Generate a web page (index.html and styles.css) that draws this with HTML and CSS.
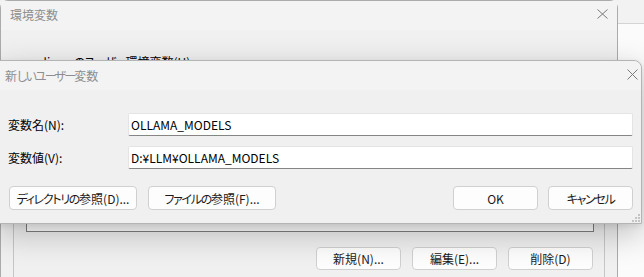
FILE: index.html
```html
<!DOCTYPE html>
<html lang="ja">
<head>
    <meta charset="UTF-8">
    <title>新しいユーザー変数</title>
    <link rel="stylesheet" href="styles.css">
</head>
<body>
    <div class="desktop">
        <!-- Parent window: 環境変数 -->
        <section class="window back-window">
            <header class="title-bar">
                <span class="title">環境変数</span>
                <svg class="close" width="11" height="10" viewBox="0 0 11 10"><path d="M0.5 0.5L10.5 9.5M10.5 0.5L0.5 9.5" stroke="#7a7a7a" stroke-width="1" fill="none"/></svg>
            </header>
            <div class="back-body">
                <p class="panel-label">cooljyun <span class="kn">のユーザー</span>環境変数(U)</p>
                <div class="panel">
                    <div class="listbox"></div>
                    <div class="button-row back-buttons">
                        <button class="btn btn-small">新規(N)...</button>
                        <button class="btn btn-small">編集(E)...</button>
                        <button class="btn btn-small">削除(D)</button>
                    </div>
                </div>
            </div>
        </section>

        <!-- Child dialog: 新しいユーザー変数 -->
        <section class="window dialog">
            <header class="title-bar dialog-title">
                <span class="title">新<span class="kn kn-title">しいユーザー</span>変数</span>
                <svg class="close" width="11" height="11" viewBox="0 0 11 11"><path d="M0.5 0.5L10.5 10.5M10.5 0.5L0.5 10.5" stroke="#7a7a7a" stroke-width="1" fill="none"/></svg>
            </header>
            <div class="dialog-body">
                <div class="form-grid">
                    <label class="field-label" for="var-name">変数名(N):</label>
                    <input class="field" id="var-name" type="text" value="OLLAMA_MODELS">
                    <label class="field-label" for="var-value">変数値(V):</label>
                    <input class="field" id="var-value" type="text" value="D:¥LLM¥OLLAMA_MODELS">
                </div>
                <div class="actions">
                    <div class="button-row">
                        <button class="btn btn-wide"><span class="kn">ディレクトリの</span>参照(D)...</button>
                        <button class="btn btn-wide"><span class="kn">ファイルの</span>参照(F)...</button>
                    </div>
                    <div class="button-row">
                        <button class="btn btn-small">OK</button>
                        <button class="btn btn-small"><span class="kn">キャンセル</span></button>
                    </div>
                </div>
            </div>
            <svg class="grip" width="8" height="8" viewBox="0 0 8 8">
                <rect x="6" y="0" width="2" height="2" fill="#c4c4c4"/>
                <rect x="3" y="3" width="2" height="2" fill="#c4c4c4"/>
                <rect x="6" y="3" width="2" height="2" fill="#c4c4c4"/>
                <rect x="0" y="6" width="2" height="2" fill="#c4c4c4"/>
                <rect x="3" y="6" width="2" height="2" fill="#c4c4c4"/>
                <rect x="6" y="6" width="2" height="2" fill="#c4c4c4"/>
            </svg>
        </section>
    </div>
</body>
</html>
```

FILE: styles.css
```css
/* Global styles */
:root {
    --window-bg: #f0f0f0;
    --title-bg: #f3f3f3;
    --title-color: #8e8e8e;
    --text-color: #1a1a1a;
    --button-border: #d0d0d0;
}

body {
    margin: 0;
    font-family: "Noto Sans CJK JP", "Noto Sans", sans-serif;
    font-size: 12px;
    font-feature-settings: "palt";
    color: var(--text-color);
    overflow: hidden;
}

/* Kana runs are narrower in the system UI font */
.kn {
    letter-spacing: -1.3px;
}

.kn-title {
    letter-spacing: -1.8px;
}

.desktop {
    position: relative;
    width: 644px;
    height: 277px;
    overflow: hidden;
    background: linear-gradient(#f2f2f2 0 23px, #d4d4d4 23px 24px, #fbfbfb 24px);
}

/* Windows */
.window {
    position: absolute;
    box-sizing: border-box;
    background: var(--window-bg);
}

.title-bar {
    position: relative;
    display: flex;
    align-items: center;
    height: 29px;
    background: var(--title-bg);
}

.title {
    color: var(--title-color);
    line-height: 1;
}

.close {
    position: absolute;
    display: block;
}

/* Parent window */
.back-window {
    left: 0;
    top: 0;
    width: 618px;
    height: 300px;
    border: 1px solid #ababab;
    border-radius: 8px 8px 0 0;
}

.back-window .title {
    padding-left: 9px;
    margin-top: -2px;
}

.back-window .close {
    left: 596px;
    top: 8px;
}

.back-body {
    padding: 0 12px;
}

/* mostly hidden behind the child dialog */
.panel-label {
    margin: 0;
    padding: 23px 0 0 10px;
    line-height: 17px;
    color: #000;
}

.panel {
    height: 220px;
    border-left: 1px solid #c6c6c6;
    border-right: 1px solid #c6c6c6;
    padding: 4px 11px 0 12px;
}

.listbox {
    height: 156px;
    border: 1px solid #7f7f7f;
    background: #ffffff;
    margin-right: -1px;
}

.back-buttons {
    justify-content: flex-end;
    margin-top: 15px;
    gap: 10px;
}

/* Child dialog */
.dialog {
    left: -3px;
    top: 60px;
    width: 645px;
    height: 164px;
    border: 1px solid #b4b4b4;
    border-radius: 0 8px 0 0;
    box-shadow: 0 10px 32px rgba(0, 0, 0, 0.24), 0 2px 6px rgba(0, 0, 0, 0.08);
}

.dialog-title {
    border-radius: 0 8px 0 0;
}

.dialog-title .title {
    padding-left: 7px;
    margin-top: 1px;
}

.dialog-title .close {
    left: 629px;
    top: 8px;
}

.dialog-body {
    padding: 23px 8px 0 10px;
}

.form-grid {
    display: grid;
    grid-template-columns: 120px 1fr;
    row-gap: 10px;
    align-items: center;
}

.field-label {
    color: #000;
}

.field {
    box-sizing: border-box;
    height: 23px;
    margin: 0;
    padding: 0 2px;
    border: 1px solid #e4e4e4;
    border-bottom-color: #858585;
    border-radius: 2px;
    background: #ffffff;
    font: inherit;
    color: #000;
    outline: none;
}

.actions {
    display: flex;
    justify-content: space-between;
    margin-top: 17px;
    padding-left: 1px;
}

.button-row {
    display: flex;
    gap: 11px;
}

.actions .button-row:last-child {
    gap: 10px;
}

/* Buttons */
.btn {
    box-sizing: border-box;
    height: 24px;
    padding: 0;
    border: 1px solid var(--button-border);
    border-radius: 4px;
    background: #fdfdfd;
    font: inherit;
    color: var(--text-color);
}

.btn-wide {
    width: 128px;
}

.btn-small {
    width: 85px;
}

.back-buttons .btn {
    height: 23px;
}

.grip {
    position: absolute;
    right: 1px;
    bottom: 1px;
}
```
